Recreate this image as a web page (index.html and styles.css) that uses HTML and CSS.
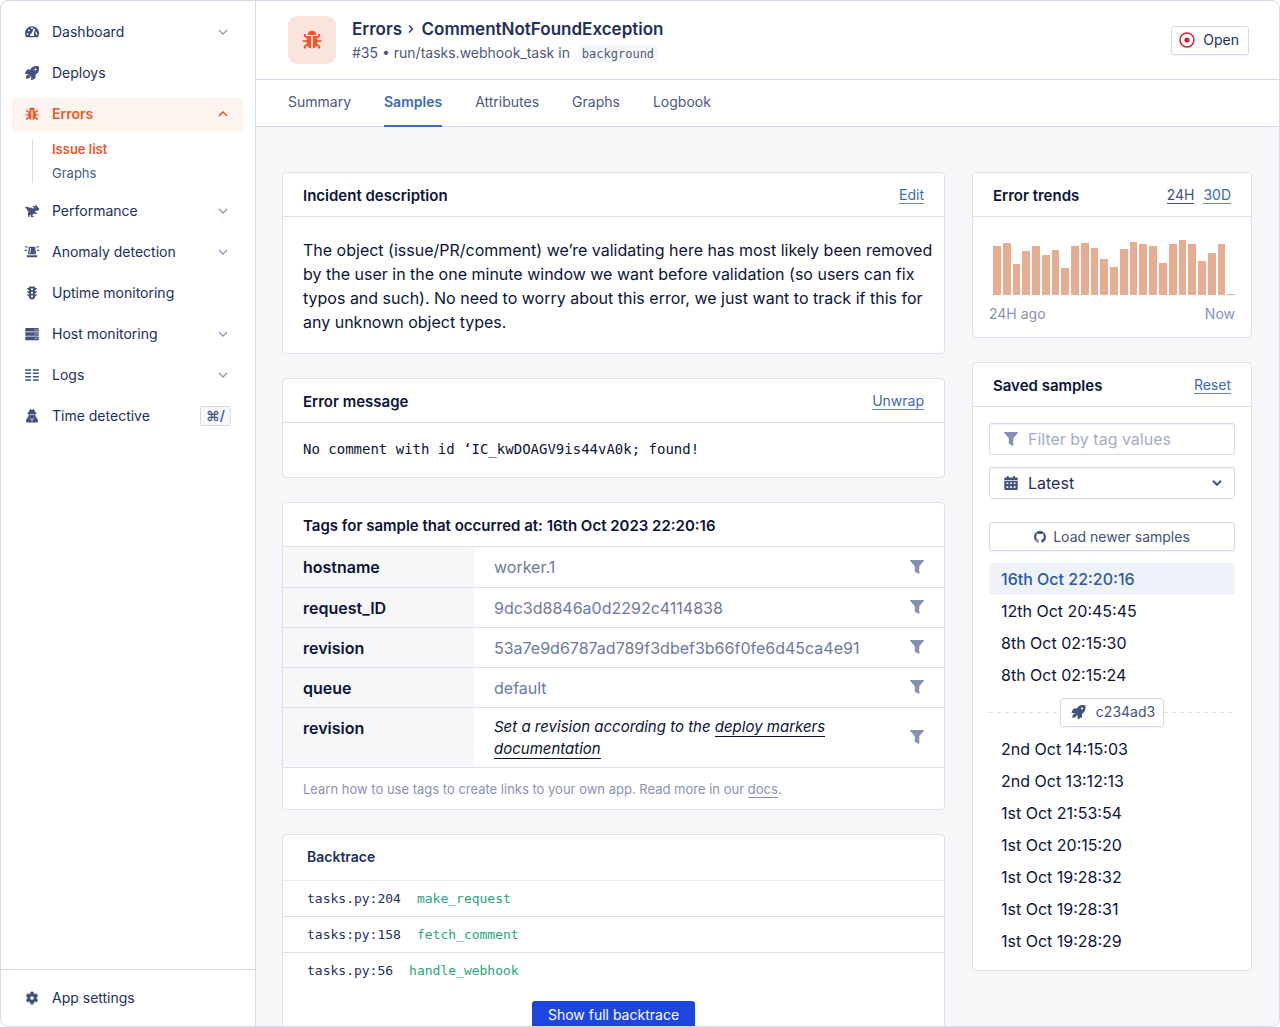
FILE: index.html
```
<!DOCTYPE html>
<html lang="en">
<head>
	<meta charset="utf-8">
	<meta name="viewport" content="width=device-width, initial-scale=1">
	<title>CommentNotFoundException</title>
	<link rel="stylesheet" href="styles.css">
</head>
<body>

	<!-- shared icons -->
	<svg class="sprite" aria-hidden="true">
		<symbol id="i-down" viewBox="0 0 10 6"><path d="M1 1l4 4 4-4" fill="none" stroke="currentColor" stroke-width="1.3"/></symbol>
		<symbol id="i-bug" viewBox="0 0 16 16">
			<path d="M4.700 3.900a3.300 3.300 0 0 1 6.600 0z"/>
			<path d="M3.800 4.700h3.500v10C5 14.300 3.800 12.900 3.800 11zM8.700 4.700h3.500V11c0 1.900-1.200 3.300-3.500 3.700z"/>
			<path d="M2.200 3v1.800l2 1.200M13.800 3v1.800l-2 1.200M.5 8.900h4M15.500 8.900h-4M2.200 14.800V13l2-1.200M13.800 14.800V13l-2-1.200" stroke="currentColor" stroke-width="1.500" fill="none"/>
		</symbol>
		<symbol id="i-rocket" viewBox="0 0 16 16">
			<path fill-rule="evenodd" d="M15.800.600c-.1-.3-.3-.4-.5-.4-1-.2-1.800-.2-2.600-.2C9.500 0 7.500 1.700 6.100 4H3c-.5 0-1 .3-1.200.8L.1 8c-.3.500.1 1 .6 1h3.100L7 12.200v3.100c0 .6.600.9 1.100.7l3.200-1.700c.5-.2.7-.7.7-1.200V9.900c2.300-1.400 4-3.400 4-6.600 0-.9 0-1.700-.2-2.700zM12 5.200A1.200 1.200 0 1 1 12 2.800a1.200 1.200 0 0 1 0 2.400z"/>
			<path d="M4 9.500c-2 .5-3 2.300-3.200 5 2.700-.1 4.800-.7 5.400-2.800z"/>
		</symbol>
		<symbol id="i-filter" viewBox="0 0 14 14"><path d="M.4 0h13.200c.4 0 .5.400.3.700L9.300 6.300v7c0 .5-.4.800-.8.500L5.200 12.100c-.3-.1-.4-.3-.4-.6V6.300L.1.700C-.1.400 0 0 .4 0z"/></symbol>
	</svg>

	<div class="app">
		<aside class="sidebar">
			<nav class="nav">
				<a class="nav-item" href="#">
					<svg class="nav-icon" viewBox="0 0 16 16"><path fill-rule="evenodd" d="M8 1.500a8 8 0 0 0-8 8c0 1.500.4 2.900 1.100 4.100.1.300.4.400.7.400h12.400c.3 0 .6-.1.700-.4A8 8 0 0 0 8 1.500zM8 2.700a1 1 0 1 1 0 2 1 1 0 0 1 0-2zM2.800 11.200a1 1 0 1 1 0-2 1 1 0 0 1 0 2zM4.400 7.200a1 1 0 1 1 0-2 1 1 0 0 1 0 2zM11.400 5l-1.500 5.200c.5.500.7 1.500.3 2.300H6.100c-.7-1.500.1-3 1.600-3.100L9.900 4.500c.3-.9 1.700-.4 1.500.5zM12.300 7.300a1 1 0 0 1 .9 1.200 1 1 0 0 1-1.500.4zM13.200 11.200a1 1 0 1 1 0-2 1 1 0 0 1 0 2z"/></svg>
					<span class="nav-label">Dashboard</span>
					<svg class="caret"><use href="#i-down"/></svg>
				</a>
				<a class="nav-item" href="#">
					<svg class="nav-icon"><use href="#i-rocket"/></svg>
					<span class="nav-label">Deploys</span>
				</a>
				<a class="nav-item active" href="#">
					<svg class="nav-icon"><use href="#i-bug"/></svg>
					<span class="nav-label">Errors</span>
					<svg class="caret" viewBox="0 0 10 6"><path d="M1 5l4-4 4 4" fill="none" stroke="currentColor" stroke-width="1.600"/></svg>
				</a>
				<div class="subnav">
					<a class="current" href="#">Issue list</a>
					<a href="#">Graphs</a>
				</div>
				<a class="nav-item" href="#">
					<svg class="nav-icon" viewBox="0 0 16 16"><path d="M0 4C1.500 2.600 3.300 3 4.800 4.200c1.500-.3 2.900 0 4.200 1L11 4.600 8.600 2.800l.7-.9 3 .9-.6-1.900.9-.3 1.900 3c1.200.5 1.800 1.400 1.800 2.600l-1.200 1.300-2.600.2-1.200 1.400 2.300 1-.4 1.200-3.700-.2-1.300 2 1.700.8-.2 1.100-3.500-.5.7-2.500-1.700.8-.5 2.100-1.200-.2-.2-2.700c-.7-.9.300-2.600 1.200-3.500C3 8.200 2.200 7.200 2.200 6z"/></svg>
					<span class="nav-label">Performance</span>
					<svg class="caret"><use href="#i-down"/></svg>
				</a>
				<a class="nav-item" href="#">
					<svg class="nav-icon" viewBox="0 0 16 16"><path fill-rule="evenodd" d="M5.500 2h5c.6 0 1 .3 1.100.9l1.200 7.800H3.200l1.200-7.800c.1-.6.500-.9 1.100-.9zM5.900 3.500L5 9.300h1l.9-5.800zM2.500 11.700h11c.3 0 .5.200.5.500v1.800H2v-1.800c0-.3.2-.5.500-.5z"/><path d="M.7 1.500l2.200 1.400M15.300 1.500l-2.200 1.400M-.2 6.200h2.400M16.200 6.200h-2.400" stroke="currentColor" stroke-width="1.300"/></svg>
					<span class="nav-label">Anomaly detection</span>
					<svg class="caret"><use href="#i-down"/></svg>
				</a>
				<a class="nav-item" href="#">
					<svg class="nav-icon" viewBox="0 0 16 16"><path fill-rule="evenodd" d="M5.500.500h5c.6 0 1 .4 1 1v.8h2c0 1.200-.7 2-2 2.400V6h2c0 1.200-.7 2-2 2.400v1.300h2c0 1.200-.7 2-2 2.400 0 2-1.500 3.400-3.500 3.400S4.500 14.100 4.500 12.100c-1.300-.4-2-1.200-2-2.400h2V8.400C3.200 8 2.500 7.200 2.500 6h2V4.700c-1.300-.4-2-1.200-2-2.400h2v-.8c0-.6.4-1 1-1zM8 2.500a1.300 1.300 0 1 0 0 2.600 1.300 1.300 0 0 0 0-2.600zM8 6.500a1.300 1.300 0 1 0 0 2.600 1.300 1.300 0 0 0 0-2.600zM8 10.500a1.300 1.300 0 1 0 0 2.600 1.300 1.300 0 0 0 0-2.600z"/></svg>
					<span class="nav-label">Uptime monitoring</span>
				</a>
				<a class="nav-item" href="#">
					<svg class="nav-icon" viewBox="0 0 16 16"><path fill-rule="evenodd" d="M1 1h14c.4 0 .7.300.7.700v2.800c0 .4-.3.700-.7.700H1c-.4 0-.7-.3-.7-.7V1.700C.3 1.300.6 1 1 1zM11 2.500v1.100h1.100V2.500zM13.200 2.500v1.100h1.100V2.500zM1 6h14c.4 0 .7.300.7.700v2.600c0 .4-.3.700-.7.700H1c-.4 0-.7-.3-.7-.7V6.700c0-.4.3-.7.700-.7zM11 7.500v1h1.100v-1zM13.200 7.500v1h1.100v-1zM1 10.800h14c.4 0 .7.300.7.700v2.800c0 .4-.3.700-.7.700H1c-.4 0-.7-.3-.7-.7v-2.800c0-.4.3-.7.700-.7zM11 12.400v1.100h1.100v-1.100zM13.200 12.400v1.100h1.100v-1.100z"/></svg>
					<span class="nav-label">Host monitoring</span>
					<svg class="caret"><use href="#i-down"/></svg>
				</a>
				<a class="nav-item" href="#">
					<svg class="nav-icon" viewBox="0 0 16 16"><path d="M.2 2.300h6.800M9 2.300h6.800M.2 6.100h6.800M9 6.100h6.800M.2 9.900h6.800M9 9.900h6.800M.2 13.700h6.800M9 13.700h6.800" stroke="currentColor" stroke-width="1.700"/></svg>
					<span class="nav-label">Logs</span>
					<svg class="caret"><use href="#i-down"/></svg>
				</a>
				<a class="nav-item" href="#">
					<svg class="nav-icon" viewBox="0 0 16 16"><path fill-rule="evenodd" d="M6 .4c.7-.2 1.300.5 2 .5s1.300-.7 2-.5c.8.300 1.200 1.700 1.500 3 1.200.2 1.900.5 1.900.9 0 .3-.5.600-1.300.8.1 1.500-.1 2.600-.7 3.400l1.900-.1-.7 1.500c1.500.6 2.100 1.800 2.100 3.500v1.200c0 .5-.3.900-.8.900H2.100c-.5 0-.8-.4-.8-.9v-1.200c0-1.700.6-2.900 2.100-3.500l-.7-1.500 1.900.1C4 7.700 3.800 6.600 3.900 5.100c-.8-.2-1.300-.5-1.300-.8 0-.4.7-.7 1.900-.9.300-1.300.7-2.700 1.500-3zM5.300 5.900l.4 1.200h1.500l.5-1.200zM8.300 5.900l.5 1.200h1.500l.4-1.200zM6.200 10l.8 4.500.5-3zM9.800 10l-1.300 1.500.5 3z"/></svg>
					<span class="nav-label">Time detective</span>
					<kbd class="shortcut">⌘/</kbd>
				</a>
			</nav>
			<div class="sidebar-footer">
				<a class="nav-item" href="#">
					<svg class="nav-icon" viewBox="0 0 16 16"><path fill-rule="evenodd" d="M6.600 1h2.800l.4 2 1.500.8 1.900-.6 1.400 2.400-1.500 1.400v1.900l1.500 1.400-1.400 2.400-1.900-.6-1.500.9-.4 2H6.600l-.4-2-1.500-.9-1.900.6-1.400-2.400L2.900 8.900V7L1.400 5.600l1.400-2.400 1.900.6L6.200 3zM8 5.700a2.300 2.300 0 1 0 0 4.600 2.300 2.300 0 0 0 0-4.600z" stroke="currentColor" stroke-width=".6" stroke-linejoin="round"/></svg>
					<span class="nav-label">App settings</span>
				</a>
			</div>
		</aside>

		<main class="main">
			<header class="header">
				<div class="header-icon"><svg><use href="#i-bug"/></svg></div>
				<div class="header-text">
					<h1>Errors
						<svg class="crumb" viewBox="0 0 6 8"><path d="M1 .5L4.500 4 1 7.500" fill="none" stroke="currentColor" stroke-width="1.300"/></svg>
						CommentNotFoundException</h1>
					<p>#35 • run/tasks.webhook_task in <code>background</code></p>
				</div>
				<button class="btn-open" type="button">
					<svg viewBox="0 0 16 16"><circle cx="8" cy="8" r="7" fill="none" stroke="currentColor" stroke-width="1.500"/><circle cx="8" cy="8" r="2.600"/></svg>
					Open
				</button>
			</header>

			<nav class="tabs">
				<a href="#">Summary</a>
				<a class="selected" href="#">Samples</a>
				<a href="#">Attributes</a>
				<a href="#">Graphs</a>
				<a href="#">Logbook</a>
			</nav>

			<div class="content">
				<div class="column">
					<section class="card">
						<div class="card-header">
							<h2>Incident description</h2>
							<a href="#">Edit</a>
						</div>
						<p class="description">The object (issue/PR/comment) we’re validating here has most likely been removed by the user in the one minute window we want before validation (so users can fix typos and such). No need to worry about this error, we just want to track if this for any unknown object types.</p>
					</section>

					<section class="card">
						<div class="card-header">
							<h2>Error message</h2>
							<a href="#">Unwrap</a>
						</div>
						<p class="message">No comment with id ‘IC_kwDOAGV9is44vA0k; found!</p>
					</section>

					<section class="card">
						<div class="card-header">
							<h2>Tags for sample that occurred at: 16th Oct 2023 22:20:16</h2>
						</div>
						<table class="tags">
							<tr>
								<th scope="row">hostname</th>
								<td>worker.1</td>
								<td class="action"><button type="button" aria-label="Filter"><svg><use href="#i-filter"/></svg></button></td>
							</tr>
							<tr>
								<th scope="row">request_ID</th>
								<td>9dc3d8846a0d2292c4114838</td>
								<td class="action"><button type="button" aria-label="Filter"><svg><use href="#i-filter"/></svg></button></td>
							</tr>
							<tr>
								<th scope="row">revision</th>
								<td>53a7e9d6787ad789f3dbef3b66f0fe6d45ca4e91</td>
								<td class="action"><button type="button" aria-label="Filter"><svg><use href="#i-filter"/></svg></button></td>
							</tr>
							<tr>
								<th scope="row">queue</th>
								<td>default</td>
								<td class="action"><button type="button" aria-label="Filter"><svg><use href="#i-filter"/></svg></button></td>
							</tr>
							<tr>
								<th scope="row">revision</th>
								<td class="hint">Set a revision according to the <a href="#">deploy markers documentation</a></td>
								<td class="action"><button type="button" aria-label="Filter"><svg><use href="#i-filter"/></svg></button></td>
							</tr>
						</table>
						<p class="card-footer">Learn how to use tags to create links to your own app. Read more in our <a href="#">docs</a>.</p>
					</section>

					<section class="card backtrace">
						<h2>Backtrace</h2>
						<ul>
							<li><span>tasks.py:204</span><a href="#">make_request</a></li>
							<li><span>tasks:py:158</span><a href="#">fetch_comment</a></li>
							<li><span>tasks.py:56</span><a href="#">handle_webhook</a></li>
						</ul>
						<button class="btn-primary" type="button">Show full backtrace</button>
					</section>
				</div>

				<div class="column side">
					<section class="card">
						<div class="card-header">
							<h2>Error trends</h2>
							<div class="ranges">
								<a class="on" href="#">24H</a>
								<a href="#">30D</a>
							</div>
						</div>
						<div class="chart">
							<div class="bars">
								<i style="height: 49px"></i>
								<i style="height: 52px"></i>
								<i style="height: 31px"></i>
								<i style="height: 44px"></i>
								<i style="height: 49px"></i>
								<i style="height: 40px"></i>
								<i style="height: 45px"></i>
								<i style="height: 27px"></i>
								<i style="height: 49px"></i>
								<i style="height: 52px"></i>
								<i style="height: 47px"></i>
								<i style="height: 36px"></i>
								<i style="height: 28px"></i>
								<i style="height: 46px"></i>
								<i style="height: 53px"></i>
								<i style="height: 51px"></i>
								<i style="height: 49px"></i>
								<i style="height: 32px"></i>
								<i style="height: 51px"></i>
								<i style="height: 55px"></i>
								<i style="height: 51px"></i>
								<i style="height: 34px"></i>
								<i style="height: 42px"></i>
								<i style="height: 51px"></i>
								<i style="height: 1px"></i>
							</div>
							<div class="axis"><span>24H ago</span><span>Now</span></div>
						</div>
					</section>

					<section class="card">
						<div class="card-header">
							<h2>Saved samples</h2>
							<a href="#">Reset</a>
						</div>
						<div class="samples">
							<label class="field">
								<svg class="muted"><use href="#i-filter"/></svg>
								<input type="text" placeholder="Filter by tag values" aria-label="Filter by tag values">
							</label>
							<label class="field">
								<svg viewBox="0 0 14 14"><path fill-rule="evenodd" d="M3 0h1.700v1.600h4.600V0H11v1.600h1.700c.6 0 1 .4 1 1v1.300H.3V2.600c0-.6.4-1 1-1H3zM.3 4.800h13.400v8.200c0 .6-.4 1-1 1H1.300c-.6 0-1-.4-1-1zM2.500 6.400v1.700h1.800V6.400zM6.100 6.400v1.700h1.800V6.400zM9.700 6.400v1.700h1.800V6.400zM2.500 10.200v1.700h1.800v-1.700zM6.100 10.200v1.700h1.800v-1.700zM9.700 10.200v1.700h1.800v-1.700z"/></svg>
								<select aria-label="Sort samples">
									<option>Latest</option>
									<option>Oldest</option>
								</select>
								<svg class="arrow" viewBox="0 0 10 6"><path d="M1 .8l4 4 4-4" fill="none" stroke="currentColor" stroke-width="2"/></svg>
							</label>
							<button class="btn-load" type="button">
								<svg viewBox="0 0 16 16"><path d="M8 0C3.580 0 0 3.580 0 8c0 3.540 2.290 6.530 5.470 7.590.4.070.55-.17.55-.38 0-.19-.01-.82-.01-1.490-2.010.37-2.530-.49-2.690-.94-.09-.23-.48-.94-.82-1.130-.28-.15-.68-.52-.01-.53.63-.01 1.080.58 1.230.82.72 1.210 1.870.87 2.330.66.07-.52.28-.87.51-1.070-1.780-.2-3.640-.89-3.640-3.950 0-.87.31-1.590.82-2.150-.08-.2-.36-1.020.08-2.120 0 0 .67-.21 2.200.82.64-.18 1.320-.27 2-.27.68 0 1.360.09 2 .27 1.530-1.040 2.200-.82 2.200-.82.44 1.100.16 1.920.08 2.120.51.56.82 1.270.82 2.150 0 3.070-1.870 3.750-3.650 3.950.29.25.54.73.54 1.480 0 1.070-.01 1.930-.01 2.200 0 .21.15.46.55.38A8.013 8.013 0 0 0 16 8c0-4.420-3.580-8-8-8z"/></svg>
								Load newer samples
							</button>
							<ul>
								<li><a class="selected" href="#">16th Oct 22:20:16</a></li>
								<li><a href="#">12th Oct 20:45:45</a></li>
								<li><a href="#">8th Oct 02:15:30</a></li>
								<li><a href="#">8th Oct 02:15:24</a></li>
							</ul>
							<div class="deploy">
								<a href="#"><svg><use href="#i-rocket"/></svg>c234ad3</a>
							</div>
							<ul>
								<li><a href="#">2nd Oct 14:15:03</a></li>
								<li><a href="#">2nd Oct 13:12:13</a></li>
								<li><a href="#">1st Oct 21:53:54</a></li>
								<li><a href="#">1st Oct 20:15:20</a></li>
								<li><a href="#">1st Oct 19:28:32</a></li>
								<li><a href="#">1st Oct 19:28:31</a></li>
								<li><a href="#">1st Oct 19:28:29</a></li>
							</ul>
						</div>
					</section>
				</div>
			</div>
		</main>
	</div>

</body>
</html>
```
FILE: styles.css
```
* {
	box-sizing: border-box;
}

body {
	margin: 0;
	font-family: Inter, "Liberation Sans", sans-serif;
	font-size: 14px;
	line-height: 20px;
	color: #21305a;
	background-color: #ffffff;
}

h1, h2, p, ul {
	margin: 0;
	padding: 0;
}

ul {
	list-style: none;
}

a {
	color: inherit;
	text-decoration: none;
}

svg {
	flex: none;
	fill: currentColor;
}

button, input, select {
	font-family: inherit;
	font-size: 14px;
	line-height: 20px;
	color: inherit;
}

.sprite {
	display: none;
}

.app {
	display: flex;
	height: 100vh;
	border: 1px solid #d6d9e8;
	border-radius: 8px;
	overflow: hidden;
}

/* sidebar */

.sidebar {
	display: flex;
	flex-direction: column;
	flex: 0 0 255px;
	border-right: 1px solid #d6d9e8;
}

.nav {
	display: flex;
	flex-direction: column;
	gap: 8px;
	flex: 1;
	padding: 15px 12px 15px 11px;
}

.nav-item {
	display: flex;
	align-items: center;
	height: 33px;
	padding: 0 12px 1px;
	border-radius: 4px;
}

.nav-icon {
	width: 16px;
	height: 14px;
	margin-right: 12px;
	color: #43527c;
}

.nav-label {
	flex: 1;
}

.caret {
	width: 10px;
	height: 6px;
	margin-right: 3px;
	color: #8d98b9;
}

.nav-item.active {
	background-color: #fef3ee;
	color: #e5592b;
	font-weight: 600;
}

.nav-item.active svg {
	color: #e5592b;
}

.subnav {
	display: flex;
	flex-direction: column;
	margin: 0 0 4px 20px;
	padding-left: 19px;
	border-left: 1px solid #d6d9e8;
	font-size: 13px;
	line-height: 20px;
	gap: 4px;
	color: #4b5981;
}

.subnav .current {
	color: #e5592b;
	font-weight: 600;
}

.shortcut {
	padding: 0 5px;
	border: 1px solid #d6d9e8;
	border-radius: 2px;
	background-color: #f5f7f9;
	font-family: inherit;
	font-size: 14px;
	font-weight: 500;
	line-height: 18px;
	color: #43527c;
}

.sidebar-footer {
	padding: 12px 11px 11px;
	border-top: 1px solid #d6d9e8;
}

/* header and tabs */

.main {
	display: flex;
	flex-direction: column;
	flex: 1;
	min-width: 0;
	background-color: #f5f7f9;
}

.header {
	display: flex;
	flex: none;
	align-items: center;
	gap: 16px;
	height: 79px;
	padding: 0 30px 0 32px;
	border-bottom: 1px solid #d6d9e8;
	background-color: #ffffff;
}

.header-icon {
	display: flex;
	align-items: center;
	justify-content: center;
	width: 48px;
	height: 48px;
	border-radius: 9px;
	background-color: #fae5dc;
	color: #e5592b;
}

.header-icon svg {
	width: 20px;
	height: 20px;
}

.header-text {
	flex: 1;
	padding-top: 2px;
}

.header h1 {
	font-size: 17px;
	font-weight: 600;
	line-height: 24px;
}

.crumb {
	width: 6px;
	height: 8px;
	margin: 0 3px 2px 2px;
}

.header p {
	line-height: 24px;
	color: #4b5981;
}

.header code {
	margin-left: 4px;
	padding: 2px 4px;
	border-radius: 3px;
	background-color: #f5f7f9;
	font-family: "DejaVu Sans Mono", monospace;
	font-size: 12px;
}

.btn-open {
	display: flex;
	align-items: center;
	gap: 8px;
	height: 29px;
	padding: 0 9px 0 7px;
	border: 1px solid #d6d9e8;
	border-radius: 3px;
	background-color: #ffffff;
	box-shadow: 0 1px 1px rgba(33, 48, 90, 0.06);
}

.btn-open svg {
	width: 16px;
	height: 16px;
	color: #d0202f;
}

.tabs {
	display: flex;
	flex: none;
	gap: 33px;
	height: 47px;
	padding-left: 32px;
	border-bottom: 1px solid #d6d9e8;
	background-color: #ffffff;
	color: #4b5981;
}

.tabs a {
	height: 47px;
	line-height: 44px;
}

.tabs .selected {
	border-bottom: 2px solid #3c6bbd;
	color: #3c6bbd;
	font-weight: 600;
}

/* cards */

.content {
	display: flex;
	flex: 1;
	align-items: flex-start;
	gap: 27px;
	min-height: 0;
	padding: 45px 27px 0 26px;
	overflow: hidden;
}

.column {
	display: flex;
	flex-direction: column;
	flex: 1;
	gap: 24px;
	min-width: 0;
}

.side {
	flex: 0 0 280px;
}

.card {
	border: 1px solid #dddfeb;
	border-radius: 4px;
	background-color: #ffffff;
}

.card-header {
	display: flex;
	align-items: center;
	justify-content: space-between;
	height: 44px;
	padding: 2px 20px 0;
	border-bottom: 1px solid #dddfeb;
}

.card-header h2 {
	font-size: 15px;
	font-weight: 600;
	color: #0b1437;
}

.card-header a {
	border-bottom: 1px solid #5c85cd;
	line-height: 16px;
	color: #3c6bbd;
}

.card-header .ranges {
	display: flex;
	gap: 9px;
}

.card-header .on {
	border-color: #43527c;
	color: #43527c;
}

.description {
	padding: 21px 8px 19px 20px;
	font-size: 16px;
	line-height: 24px;
	color: #0b1437;
}

.message {
	padding: 15px 20px 17px;
	font-family: "DejaVu Sans Mono", monospace;
	line-height: 22px;
	color: #0b1437;
}

.tags {
	width: 100%;
	border-collapse: collapse;
	font-size: 16px;
	line-height: 22px;
}

.tags tr {
	height: 40px;
	border-bottom: 1px solid #dddfeb;
}

.tags th {
	width: 191px;
	padding: 9px 20px 8px;
	background-color: #f5f7f9;
	font-weight: 600;
	text-align: left;
	vertical-align: top;
	color: #0b1437;
}

.tags td {
	padding: 9px 20px 8px;
	color: #6c7aa3;
}

.tags .hint {
	padding: 8px 20px 7px;
	font-size: 15px;
	font-style: italic;
	color: #0b1437;
}

.hint a {
	border-bottom: 1px solid #0b1437;
}

.tags .action {
	width: 54px;
	padding: 0 20px;
}

.action button {
	display: flex;
	padding: 0;
	border: none;
	background: none;
	color: #8592b5;
}

.action svg {
	width: 14px;
	height: 14px;
}

.card-footer {
	padding: 11px 20px 10px;
	font-size: 13px;
	color: #8793b5;
}

.card-footer a {
	border-bottom: 1px solid #8793b5;
}

.backtrace h2 {
	padding: 12px 24px 13px;
	border-bottom: 1px solid #ebecf3;
	font-size: 14px;
	font-weight: 600;
}

.backtrace li {
	display: flex;
	gap: 16px;
	height: 36px;
	padding: 0 24px;
	border-bottom: 1px solid #dddfeb;
	font-family: "DejaVu Sans Mono", monospace;
	font-size: 13px;
	line-height: 36px;
}

.backtrace li:last-child {
	border-bottom: none;
}

.backtrace li a {
	color: #2aa576;
}

.btn-primary {
	display: block;
	height: 28px;
	margin: 12px auto 24px;
	padding: 0 16px;
	border: none;
	border-radius: 3px;
	background-color: #1c46dd;
	color: #ffffff;
}

/* error trends */

.chart {
	padding: 23px 16px 13px;
}

.bars {
	display: flex;
	align-items: flex-end;
	gap: 2px;
	height: 55px;
	padding-left: 4px;
}

.bars i {
	flex: 1;
	background-color: #e5ae92;
}

.axis {
	display: flex;
	justify-content: space-between;
	margin-top: 9px;
	color: #8793b5;
}

/* saved samples */

.samples {
	padding: 16px 16px 13px;
}

.field {
	display: flex;
	align-items: center;
	gap: 10px;
	height: 32px;
	margin-bottom: 12px;
	padding: 0 12px 0 14px;
	border: 1px solid #d6d9e8;
	border-radius: 3px;
	box-shadow: inset 0 1px 1px rgba(33, 48, 90, 0.04);
	color: #43527c;
}

.field svg {
	width: 14px;
	height: 14px;
}

.field .muted {
	color: #8592b5;
}

.field .arrow {
	width: 10px;
	height: 6px;
}

.field input, .field select {
	flex: 1;
	min-width: 0;
	padding: 0;
	border: none;
	outline: none;
	background: none;
	appearance: none;
	font-size: 16px;
	color: #21305a;
}

.field input::placeholder {
	color: #a4adc8;
	opacity: 1;
}

.btn-load {
	display: flex;
	align-items: center;
	justify-content: center;
	gap: 7px;
	width: 100%;
	height: 29px;
	margin: 23px 0 12px;
	border: 1px solid #d6d9e8;
	border-radius: 3px;
	background-color: #ffffff;
	box-shadow: 0 1px 1px rgba(33, 48, 90, 0.06);
	color: #43527c;
}

.btn-load svg {
	width: 12px;
	height: 12px;
}

.samples li a {
	display: block;
	padding: 0 12px;
	border-radius: 4px;
	font-size: 16px;
	line-height: 32px;
	color: #0b1437;
}

.samples li .selected {
	background-color: #eef3fa;
	color: #2c58a8;
	font-weight: 500;
}

.deploy {
	display: flex;
	align-items: center;
	height: 42px;
}

.deploy::before, .deploy::after {
	content: "";
	flex: 1;
	height: 1px;
	background: repeating-linear-gradient(to right, #dddfeb 0 4px, transparent 4px 8px);
}

.deploy a {
	display: flex;
	align-items: center;
	gap: 10px;
	height: 29px;
	padding: 0 8px 0 10px;
	border: 1px solid #d6d9e8;
	border-radius: 3px;
	box-shadow: 0 1px 1px rgba(33, 48, 90, 0.06);
	color: #43527c;
}

.deploy svg {
	width: 15px;
	height: 14px;
}
```
